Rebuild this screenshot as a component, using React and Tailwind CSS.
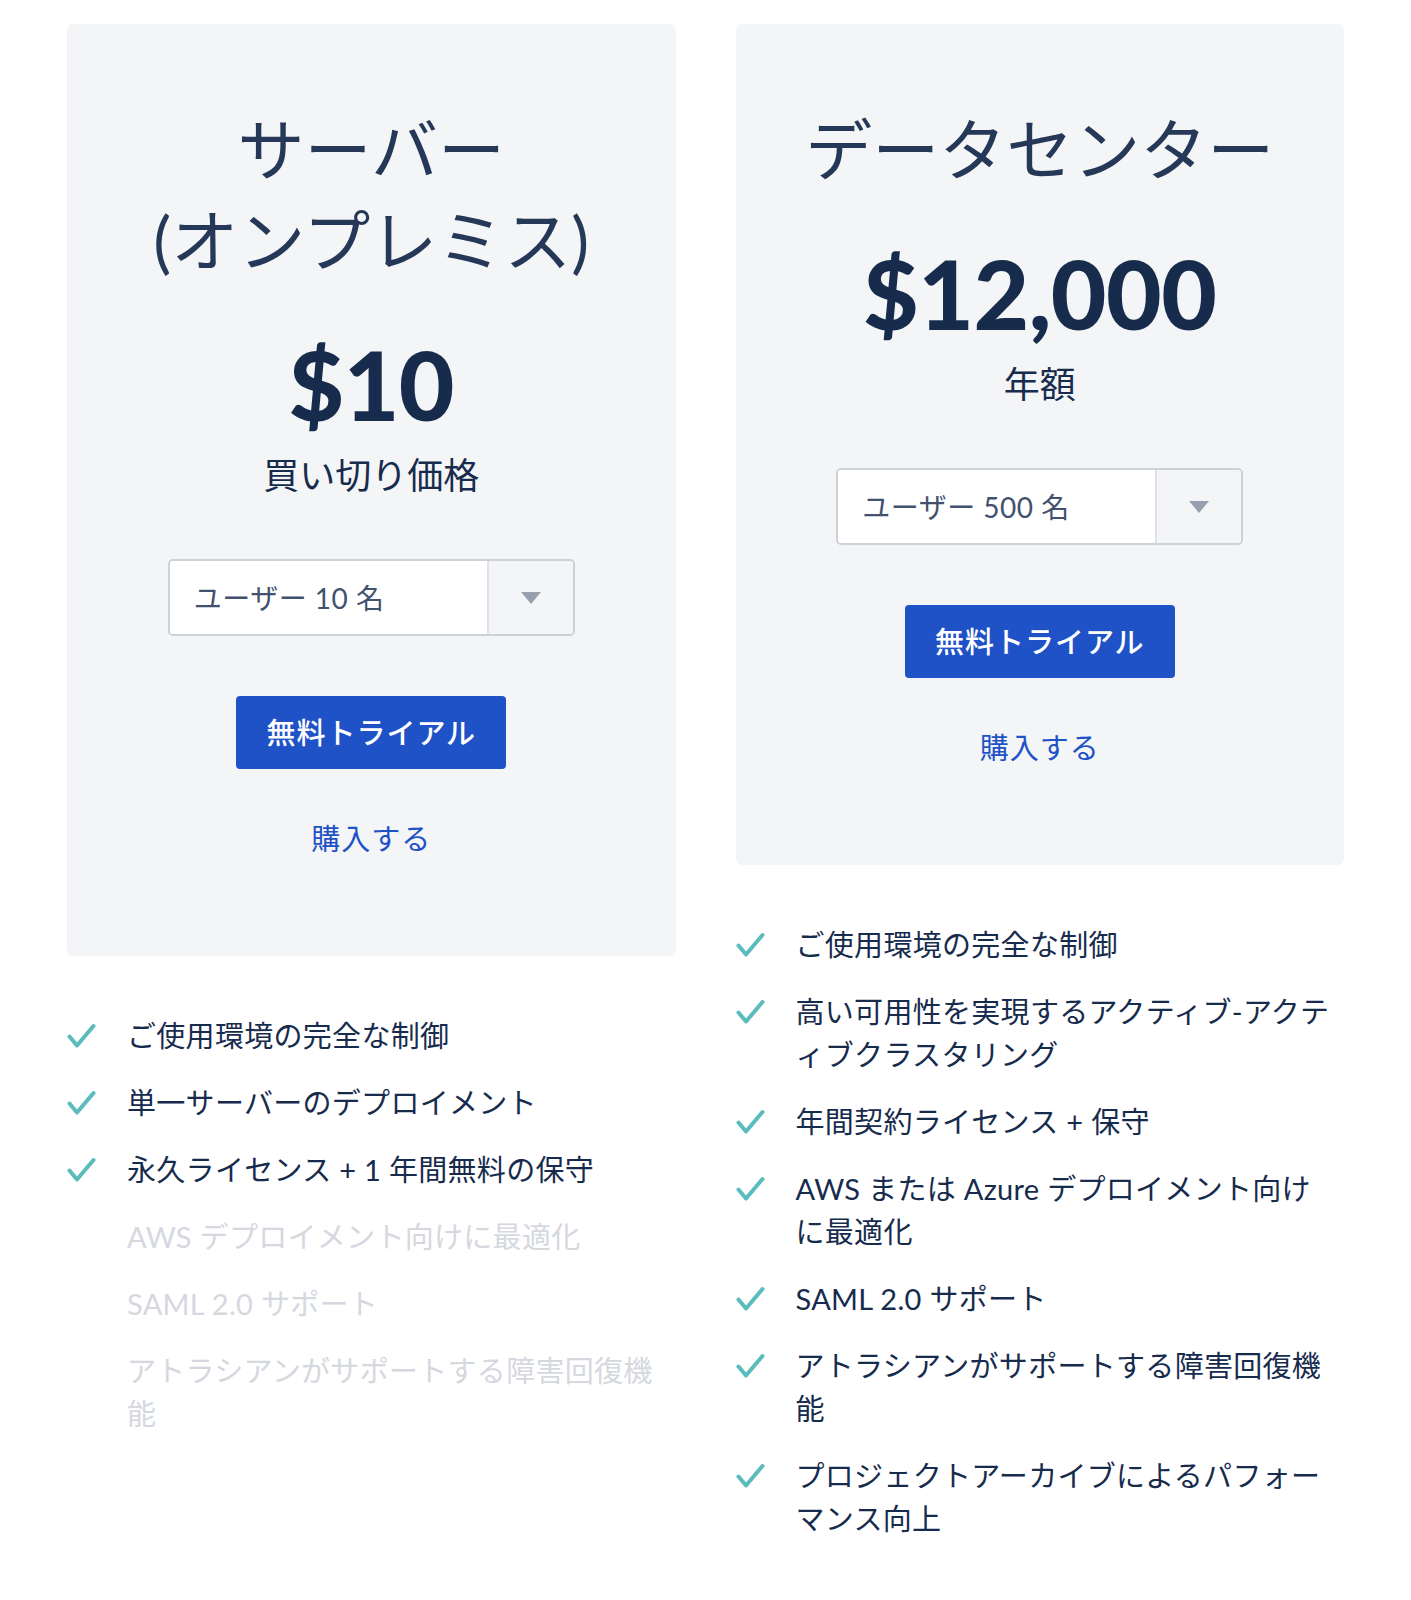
import { useState } from "react";

const plans = [
  {
    title: ["サーバー", "(オンプレミス)"],
    price: "$10",
    sub: "買い切り価格",
    users: "ユーザー 10 名",
    features: [
      { lines: ["ご使用環境の完全な制御"], on: true },
      { lines: ["単一サーバーのデプロイメント"], on: true },
      { lines: ["永久ライセンス + 1 年間無料の保守"], on: true },
      { lines: ["AWS デプロイメント向けに最適化"], on: false },
      { lines: ["SAML 2.0 サポート"], on: false },
      { lines: ["アトラシアンがサポートする障害回復機", "能"], on: false },
    ],
  },
  {
    title: ["データセンター"],
    price: "$12,000",
    sub: "年額",
    users: "ユーザー 500 名",
    features: [
      { lines: ["ご使用環境の完全な制御"], on: true },
      { lines: ["高い可用性を実現するアクティブ-アクテ", "ィブクラスタリング"], on: true },
      { lines: ["年間契約ライセンス + 保守"], on: true },
      { lines: ["AWS または Azure デプロイメント向け", "に最適化"], on: true },
      { lines: ["SAML 2.0 サポート"], on: true },
      { lines: ["アトラシアンがサポートする障害回復機", "能"], on: true },
      { lines: ["プロジェクトアーカイブによるパフォー", "マンス向上"], on: true },
    ],
  },
];

const Check = () => (
  <svg width="29" height="26" viewBox="0 0 29 26" fill="none">
    <path
      d="M2.5 13.5 L10 22.5 L26.5 3"
      stroke="#5bbcbd"
      strokeWidth="4"
      strokeLinecap="round"
      strokeLinejoin="round"
    />
  </svg>
);

const UserSelect = ({ label }) => {
  const [open, setOpen] = useState(false);
  return (
    <button
      type="button"
      onClick={() => setOpen(!open)}
      className="mt-[60px] w-[407px] h-[77px] flex border-2 border-[#cdd1d8] rounded-[5px] overflow-hidden"
    >
      <span className="flex-1 bg-white flex items-center pl-[24px] text-[28px] text-[#42526e] tracking-[0.5px]">
        {label}
      </span>
      <span className="w-[86px] bg-[#f4f5f7] border-l-2 border-[#dfe1e6] flex items-center justify-center">
        <svg width="20" height="12" viewBox="0 0 20 12">
          <path d="M0 0 L20 0 L10 12 Z" fill="#97a0af" />
        </svg>
      </span>
    </button>
  );
};

const PlanCard = ({ plan }) => (
  <div className="flex flex-col">
    <div className="bg-[#f4f5f7] rounded-[6px] pt-[80px] pb-[97px] flex flex-col items-center">
      <h2 className="text-[67px] leading-[91px] font-normal text-[#253858] text-center">
        {plan.title.map((t, i) => (
          <span key={i} className="block">{t}</span>
        ))}
      </h2>
      <div className="mt-[50px] text-[96px] leading-[96px] font-black text-[#172b4d] tracking-[-0.5px]">
        {plan.price}
      </div>
      <div className="mt-[19px] text-[36px] leading-[48px] text-[#172b4d]">{plan.sub}</div>
      <UserSelect label={plan.users} />
      <button
        type="button"
        className="mt-[60px] w-[270px] h-[73px] rounded-[4px] bg-[#1f52c7] text-white text-[29px] font-medium tracking-[1px]"
      >
        無料トライアル
      </button>
      <a href="#" className="mt-[50px] text-[29px] leading-[40px] text-[#1f52c7] tracking-[1px]">
        購入する
      </a>
    </div>

    <ul className="mt-[58px] flex flex-col gap-6">
      {plan.features.map((f, i) => (
        <li key={i} className="flex items-start">
          <span className="w-[60px] shrink-0 h-[43px] flex items-center">
            {f.on && <Check />}
          </span>
          <span
            className={
              "text-[29px] leading-[43px] tracking-[0.3px] " +
              (f.on ? "text-[#172b4d]" : "text-[#d5d8de]")
            }
          >
            {f.lines.map((l, j) => (
              <span key={j} className="block whitespace-nowrap">{l}</span>
            ))}
          </span>
        </li>
      ))}
    </ul>
  </div>
);

export default function App() {
  return (
    <div className="min-h-[1600px] bg-white font-['Lato','Noto_Sans_CJK_JP',sans-serif] pt-[24px]">
      <div className="w-[1277px] mx-auto grid grid-cols-2 gap-[60px] items-start">
        {plans.map((p, i) => (
          <PlanCard key={i} plan={p} />
        ))}
      </div>
    </div>
  );
}
